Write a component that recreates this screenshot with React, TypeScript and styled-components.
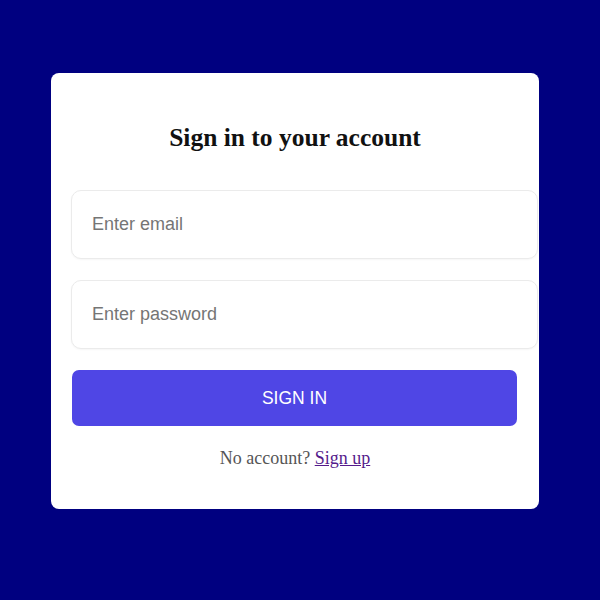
import styled, { createGlobalStyle } from "styled-components";

const GlobalStyle = createGlobalStyle`
  html, body {
    margin: 0;
    padding: 0;
    background: #000080;
  }
  * {
    box-sizing: border-box;
  }
`;

const Page = styled.div`
  min-height: 600px;
  padding: 73px 0 0 51px;
`;

const Card = styled.form`
  width: 488px;
  background: #ffffff;
  border-radius: 8px;
  padding: 51px 20px 41px;
  display: flex;
  flex-direction: column;
`;

const Title = styled.h2`
  margin: 0 0 38px;
  font-family: "Liberation Serif", "Times New Roman", serif;
  font-weight: bold;
  font-size: 25.5px;
  line-height: 28px;
  color: #111111;
  text-align: center;
`;

const Fields = styled.div`
  display: flex;
  flex-direction: column;
  gap: 21px;
  margin-bottom: 21px;
`;

const Input = styled.input`
  width: 467px;
  height: 69px;
  padding: 0 20px;
  border: 1px solid #ebebeb;
  border-radius: 10px;
  background: #ffffff;
  font-family: "Liberation Sans", Arial, sans-serif;
  font-size: 18px;
  color: #333333;
  outline: none;
  box-shadow: 0 1px 2px rgba(0, 0, 0, 0.04);

  &::placeholder {
    color: #757575;
  }
`;

const Button = styled.button`
  width: 445px;
  height: 56px;
  margin-left: 1px;
  border: none;
  border-radius: 7px;
  background: #4f46e5;
  color: #ffffff;
  font-family: "Liberation Sans", Arial, sans-serif;
  font-size: 17.5px;
  cursor: pointer;
`;

const Footer = styled.p`
  margin: 23px 0 0;
  font-family: "Liberation Serif", "Times New Roman", serif;
  font-size: 18px;
  line-height: 19px;
  color: #555555;
  text-align: center;
`;

const Link = styled.a`
  color: #551a8b;
  text-decoration: underline;
`;

export default function App() {
  return (
    <>
      <GlobalStyle />
      <Page>
        <Card onSubmit={(e) => e.preventDefault()}>
          <Title>Sign in to your account</Title>
          <Fields>
            <Input type="email" placeholder="Enter email" />
            <Input type="password" placeholder="Enter password" />
          </Fields>
          <Button type="submit">SIGN IN</Button>
          <Footer>
            No account? <Link href="#">Sign up</Link>
          </Footer>
        </Card>
      </Page>
    </>
  );
}
